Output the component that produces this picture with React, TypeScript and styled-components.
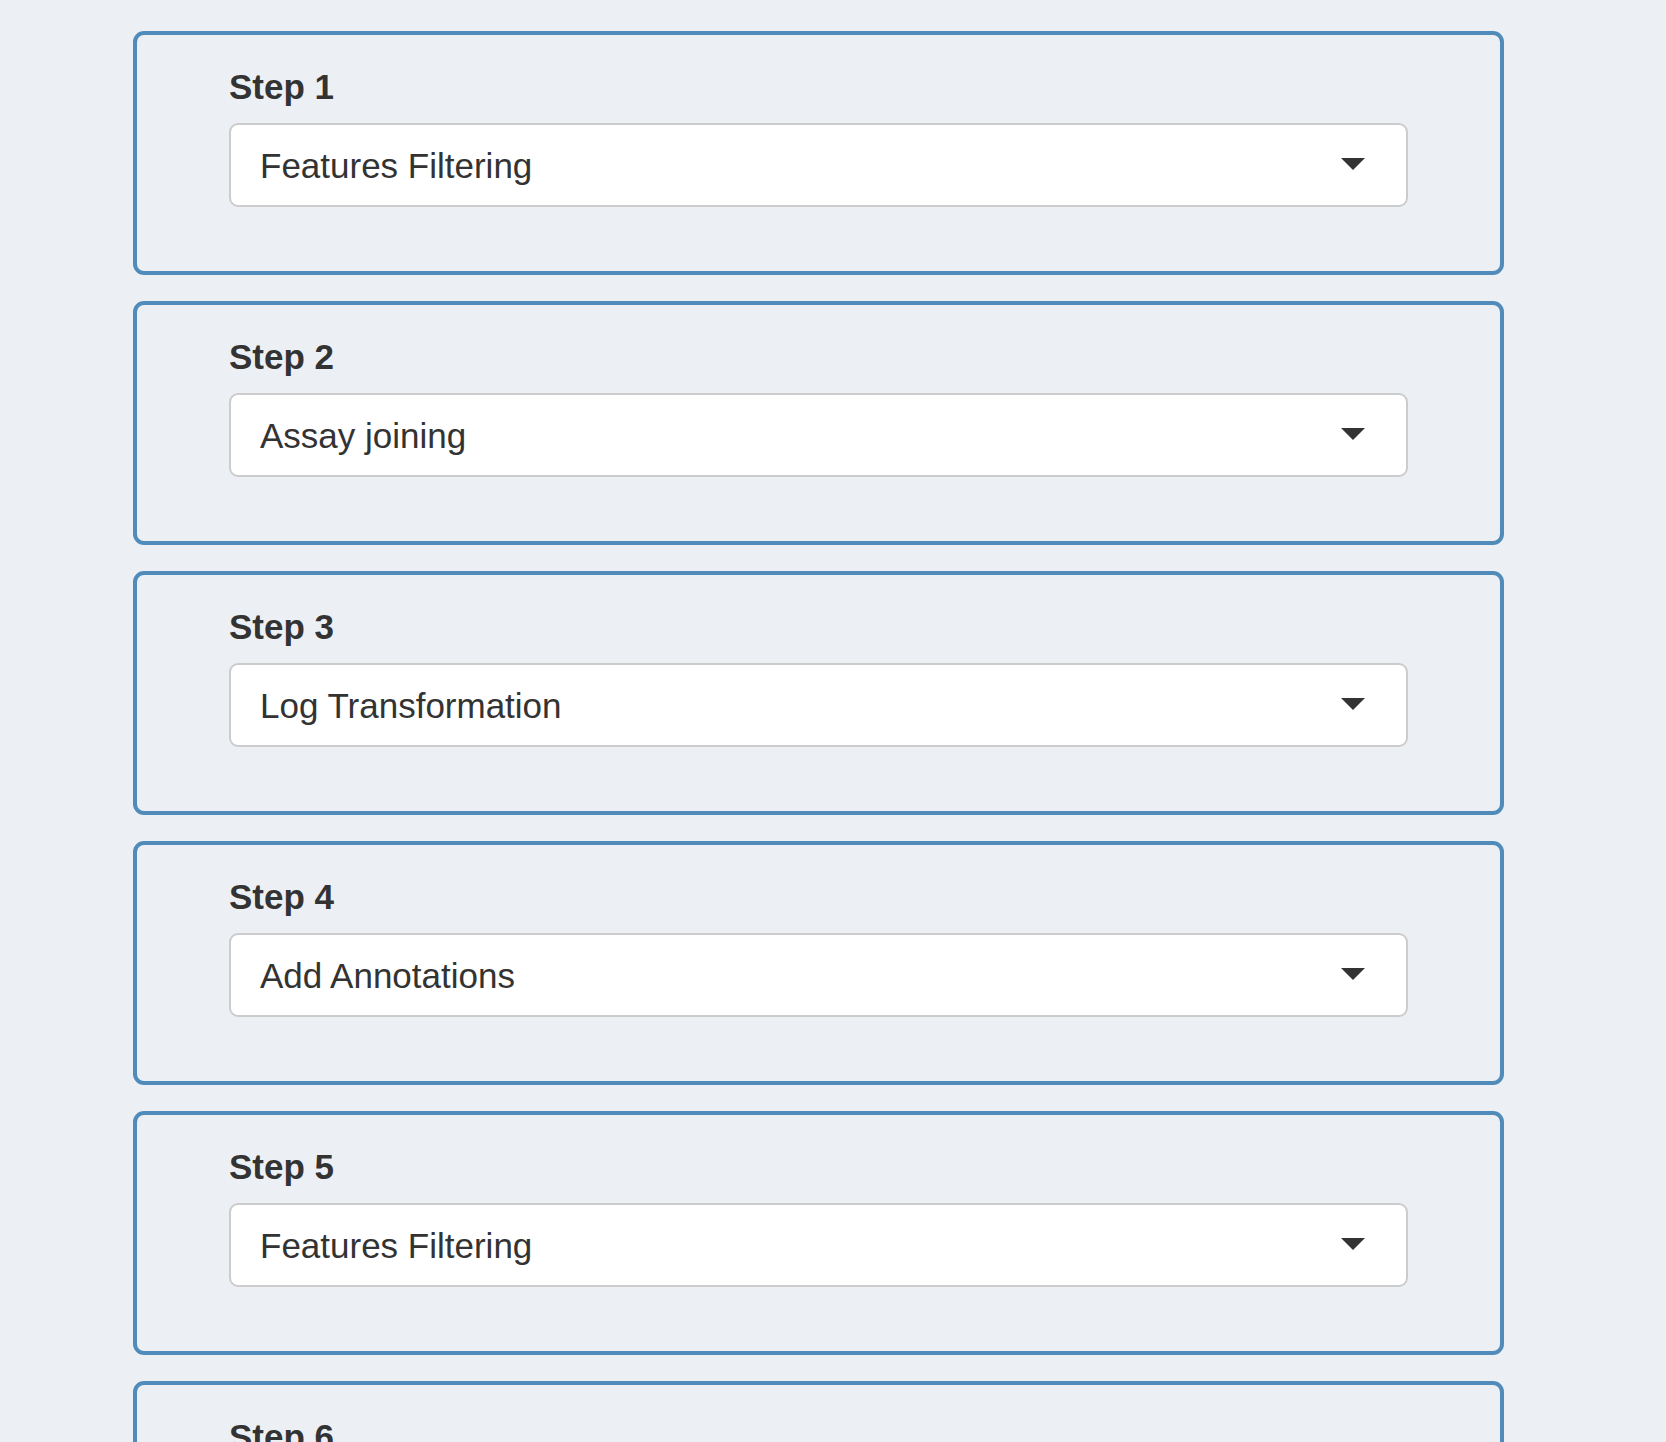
import React from "react";
import styled, { createGlobalStyle } from "styled-components";

const GlobalStyle = createGlobalStyle`
  html, body {
    margin: 0;
    padding: 0;
    background: #ecf0f5;
  }
  body {
    font-family: "Liberation Sans", Arial, Helvetica, sans-serif;
    color: #333;
  }
`;

const Page = styled.div`
  padding: 31px 0 40px 133px;
  display: flex;
  flex-direction: column;
  gap: 26px;
`;

const StepCard = styled.section`
  width: 1371px;
  box-sizing: border-box;
  border: 4px solid #508bb9;
  border-radius: 11px;
  padding: 27px 92px 64px;
  display: flex;
  flex-direction: column;
`;

const StepLabel = styled.label`
  font-size: 35px;
  font-weight: 700;
  line-height: 50px;
  margin-bottom: 11px;
  color: #333;
`;

const SelectBox = styled.div`
  height: 84px;
  box-sizing: border-box;
  background: #fff;
  border: 2px solid #cccccc;
  border-radius: 9px;
  padding: 2px 41px 0 29px;
  display: flex;
  align-items: center;
  justify-content: space-between;
  font-size: 35px;
  color: #333;
  cursor: pointer;
`;

const SelectValue = styled.span`
  white-space: nowrap;
`;

const Caret = () => (
  <svg width="24" height="12" viewBox="0 0 24 12" style={{ marginTop: -4 }}>
    <polygon points="0,0 24,0 12,12" fill="#333" />
  </svg>
);

const steps = [
  "Features Filtering",
  "Assay joining",
  "Log Transformation",
  "Add Annotations",
  "Features Filtering",
  "Normalisation",
];

export default function App() {
  return (
    <>
      <GlobalStyle />
      <Page>
        {steps.map((value, i) => (
          <StepCard key={i}>
            <StepLabel>Step {i + 1}</StepLabel>
            <SelectBox>
              <SelectValue>{value}</SelectValue>
              <Caret />
            </SelectBox>
          </StepCard>
        ))}
      </Page>
    </>
  );
}
